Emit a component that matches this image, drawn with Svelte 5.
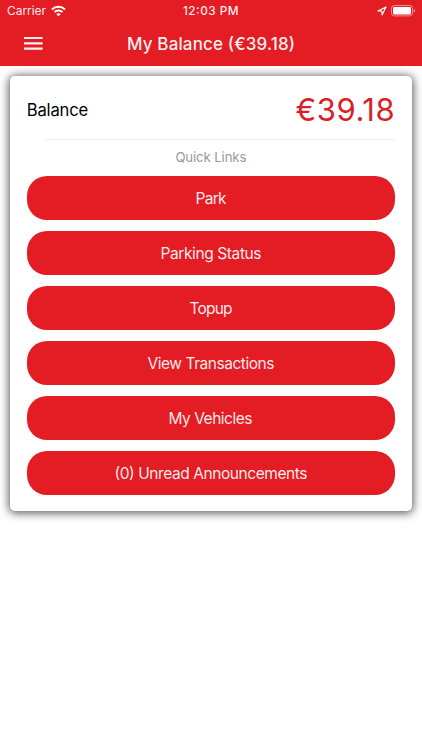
<script lang="ts">
  let { balance = '€39.18', unread = 0 }: { balance?: string; unread?: number } = $props();

  const links = $derived([
    { label: 'Park', width: 31 },
    { label: 'Parking Status', width: 101 },
    { label: 'Topup', width: 43 },
    { label: 'View Transactions', width: 127 },
    { label: 'My Vehicles', width: 84 },
    { label: `(${unread}) Unread Announcements`, width: 193 },
  ]);
</script>

<div class="screen">
  <header>
    <div class="status">
      <div class="carrier">
        <svg class="label" width="39" height="16"><text x="0" y="12.4" textLength="39">Carrier</text></svg>
        <svg class="wifi" width="15" height="12" viewBox="0 0 16 12" fill="none" stroke="#fff" stroke-width="2.2">
          <path d="M1 4.4C4.9.6 11.1.6 15 4.4" />
          <path d="M3.7 7.2c2.4-2.3 6.2-2.3 8.6 0" />
          <path d="M8 11.6 5.6 9.2c1.3-1.2 3.5-1.2 4.8 0z" fill="#fff" stroke="none" />
        </svg>
      </div>
      <svg class="time" width="56" height="16"><text x="0" y="12.4" textLength="55.5">12:03 PM</text></svg>
      <div class="indicators">
        <svg width="10" height="10" viewBox="0 0 10 10" fill="none" stroke="#fff" stroke-width="1.1" stroke-linejoin="round">
          <path d="M.9 4.9 9 .9 5.1 9 4.9 5z" />
        </svg>
        <svg width="25" height="12" viewBox="0 0 25 12">
          <rect x=".5" y=".5" width="21" height="10.4" rx="2.8" fill="none" stroke="#fff" stroke-opacity=".5" />
          <rect x="2" y="2" width="18" height="7.4" rx="1.3" fill="#fff" />
          <path d="M22.8 3.8v3.8c.8-.3 1.3-1 1.3-1.9s-.5-1.6-1.3-1.9z" fill="#fff" fill-opacity=".55" />
        </svg>
      </div>
    </div>
    <div class="toolbar">
      <button class="menu" aria-label="Menu">
        <svg width="19" height="13" viewBox="0 0 19 13" fill="#fff" fill-opacity=".93">
          <path d="M0 0h18.6v2.1H0zM0 5.3h18.6v2.1H0zM0 10.6h18.6v2.1H0z" />
        </svg>
      </button>
      <svg class="title" width="168" height="24"><text x="0" y="17.5" textLength="168">My Balance ({balance})</text></svg>
    </div>
  </header>

  <main class="card">
    <div class="balance">
      <svg width="62" height="24"><text x="-.3" y="18.7" textLength="61.5">Balance</text></svg>
      <svg class="amount" width="98" height="36"><text x="-1.4" y="29.8" textLength="99">{balance}</text></svg>
    </div>
    <div class="caption">
      <svg width="71" height="18"><text x="-.6" y="13" textLength="71">Quick Links</text></svg>
    </div>
    <nav>
      {#each links as link}
        <button class="link">
          <svg width={link.width} height="20"><text x="-.5" y="15.8" textLength={link.width}>{link.label}</text></svg>
        </button>
      {/each}
    </nav>
  </main>
</div>

<style>
  :global(body) { background: #fff; }
  .screen { height: 750px; overflow: hidden; font-family: Inter, "Liberation Sans", sans-serif; }
  svg { display: block; overflow: visible; flex: none; }
  button { border: 0; padding: 0; font: inherit; cursor: pointer; }

  header { height: 65.7px; background: #e41d24; }
  .status { display: grid; grid-template-columns: 1fr 56px 1fr; height: 22px; padding: 0 7px; align-items: center; }
  .status text { fill: #fff; fill-opacity: .93; font-size: 12px; }
  .carrier { display: flex; align-items: center; gap: 5px; }
  .label { margin-top: -1px; }
  .wifi { margin-top: -1px; }
  .time { margin-top: -1px; }
  .status .time text { font-weight: 550; font-size: 11.8px; }
  .indicators { display: flex; justify-content: flex-end; align-items: center; gap: 4px; margin: -1px -1px 0 0; }

  .toolbar { display: grid; grid-template-columns: 1fr 168px 1fr; height: 43px; align-items: center; }
  .menu { width: 19px; height: 13px; margin-left: 23.5px; margin-top: -1px; background: none; }
  .title text { fill: #fff; fill-opacity: .95; font-size: 17px; font-weight: 540; }

  .card {
    box-sizing: border-box;
    height: 435.6px;
    margin: 10px 10.4px 0;
    padding: 0 16.4px;
    background: #fff;
    border-radius: 5px;
    box-shadow: 0 1px 10px 1px rgba(0, 0, 0, .68);
  }
  .balance { display: flex; justify-content: space-between; align-items: center; height: 63px; padding-top: 4px; box-sizing: border-box; }
  .balance text { font-size: 16.6px; fill: #000; }
  .balance .amount text { font-size: 31px; fill: #d91f28; }
  .caption { display: flex; justify-content: center; height: 37px; margin-left: 17.5px; padding: 9px 17.5px 0 0; box-sizing: border-box; border-top: 1px solid #f0f0f0; }
  .caption text { font-size: 13.2px; fill: #999; }

  nav { display: flex; flex-direction: column; gap: 10.7px; }
  .link { display: flex; align-items: center; justify-content: center; height: 44.3px; border-radius: 20px; background: #e41d24; }
  .link text { fill: #fff; fill-opacity: .93; font-size: 15.5px; }
</style>
